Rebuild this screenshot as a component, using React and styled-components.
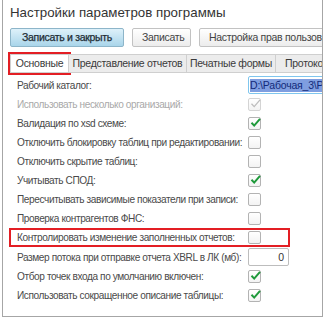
import styled, { createGlobalStyle } from "styled-components";

const Global = createGlobalStyle`
  html, body { margin: 0; padding: 0; background: #fff; }
  body { font-family: "Liberation Sans", Arial, sans-serif; }
`;

const Frame = styled.div`
  margin-left: 2px;
  width: 319px;
  height: 316px;
  border: 1px solid #a6a6a6;
  border-top: none;
  overflow: hidden;
  background: #fff;
`;

const Title = styled.div`
  padding: 5px 0 0 7px;
  height: 19px;
  font-size: 13.3px;
  color: #333;
  white-space: nowrap;
`;

const Toolbar = styled.div`
  display: flex;
  gap: 8px;
  padding: 4px 0 0 7px;
  white-space: nowrap;
`;

const Button = styled.div`
  flex: none;
  width: ${(p) => (p.$width ? `${p.$width}px` : "auto")};
  box-sizing: border-box;
  height: 19px;
  line-height: 17px;
  text-align: center;
  padding: 0 9px;
  border: 1px solid ${(p) => (p.$primary ? "#8db5c9" : "#c2c2c2")};
  border-radius: 2px;
  font-size: 10.5px;
  letter-spacing: -0.3px;
  font-weight: normal;
  color: ${(p) => (p.$primary ? "#1f2d35" : "#444")};
  -webkit-text-stroke: ${(p) => (p.$primary ? "0.25px #1f2d35" : "0")};
  background: ${(p) =>
    p.$primary
      ? "linear-gradient(#def1fa, #a9d5ea)"
      : "linear-gradient(#ffffff, #ececec)"};
`;

const Tabs = styled.div`
  display: flex;
  margin: 7px 0 0 7px;
  white-space: nowrap;
`;

const Tab = styled.div`
  flex: none;
  width: ${(p) => p.$width}px;
  box-sizing: border-box;
  height: 19px;
  line-height: 17px;
  text-align: center;
  font-size: 10.5px;
  letter-spacing: -0.3px;
  color: #3a3a3a;
  background: ${(p) => (p.$active ? "#fff" : "#ececec")};
  border: 1px solid #cfcfcf;
  border-left: none;
  outline: ${(p) => (p.$active ? "2px solid #e31e24" : "none")};
  &:first-child {
    border-left: 1px solid #cfcfcf;
  }
`;

const Form = styled.div`
  padding: 2px 0 0 6px;
`;

const Row = styled.div`
  display: flex;
  align-items: center;
  width: 281px;
  height: ${(p) => (p.$tall ? 20 : 19)}px;
  box-sizing: border-box;
  border: 2px solid ${(p) => (p.$marked ? "#e31e24" : "transparent")};
  padding-left: 6px;
  white-space: nowrap;
`;

const Label = styled.div`
  flex: none;
  width: 231px;
  font-size: 10.1px;
  letter-spacing: -0.4px;
  color: ${(p) => (p.$disabled ? "#a9a9a9" : "#4a4a4a")};
`;

const TextInput = styled.div`
  flex: none;
  width: ${(p) => p.$width}px;
  height: 18px;
  box-sizing: border-box;
  border: 1px solid ${(p) => (p.$focused ? "#7fc6ee" : "#bdbdbd")};
  border-radius: 2px;
  padding: 0 ${(p) => (p.$focused ? 1 : 4)}px;
  display: flex;
  align-items: center;
  justify-content: ${(p) => (p.$right ? "flex-end" : "flex-start")};
  overflow: hidden;
  font-size: 10.5px;
  letter-spacing: -0.2px;
  color: #333;
`;

const Selected = styled.span`
  background: #7f9ee0;
  color: #122a7a;
  line-height: 13px;
`;

const Box = styled.div`
  flex: none;
  position: relative;
  width: 11px;
  height: 11px;
  border: 1px solid ${(p) => (p.$disabled ? "#d4d4d4" : "#b3b3b3")};
  border-radius: 2px;
  background: linear-gradient(#fff, #f3f3f3);
  svg {
    position: absolute;
    left: 1px;
    top: -1px;
  }
`;

function Check({ on, disabled }) {
  return (
    <Box $disabled={disabled}>
      {on && (
        <svg width="11" height="11" viewBox="0 0 11 11">
          <path
            d="M1.5 5.8 L4.2 8.6 L10 1.8"
            fill="none"
            stroke={disabled ? "#bdbdbd" : "#1f9a3b"}
            strokeWidth={disabled ? 1.3 : 2}
          />
        </svg>
      )}
    </Box>
  );
}

const rows = [
  { label: "Использовать несколько организаций:", on: true, disabled: true },
  { label: "Валидация по xsd схеме:", on: true },
  { label: "Отключить блокировку таблиц при редактировании:", on: false },
  { label: "Отключить скрытие таблиц:", on: false },
  { label: "Учитывать СПОД:", on: true },
  { label: "Пересчитывать зависимые показатели при записи:", on: false },
  { label: "Проверка контрагентов ФНС:", on: false },
  { label: "Контролировать изменение заполненных отчетов:", on: false, marked: true },
];

export default function App() {
  return (
    <>
      <Global />
      <Frame>
        <Title>Настройки параметров программы</Title>
        <Toolbar>
          <Button $primary $width={114}>Записать и закрыть</Button>
          <Button $width={59}>Записать</Button>
          <Button>Настройка прав пользователей</Button>
        </Toolbar>
        <Tabs>
          <Tab $active $width={59}>Основные</Tab>
          <Tab $width={118}>Представление отчетов</Tab>
          <Tab $width={89}>Печатные формы</Tab>
          <Tab $width={70}>Протоколы</Tab>
        </Tabs>
        <Form>
          <Row $tall>
            <Label>Рабочий каталог:</Label>
            <TextInput $width={100} $focused>
              <Selected>D:\Рабочая_3\Работа</Selected>
            </TextInput>
          </Row>
          {rows.map((r, i) => (
            <Row key={i} $marked={r.marked}>
              <Label $disabled={r.disabled}>{r.label}</Label>
              <Check on={r.on} disabled={r.disabled} />
            </Row>
          ))}
          <Row $tall>
            <Label>Размер потока при отправке отчета XBRL в ЛК (мб):</Label>
            <TextInput $width={41} $right>0</TextInput>
          </Row>
          <Row>
            <Label>Отбор точек входа по умолчанию включен:</Label>
            <Check on />
          </Row>
          <Row>
            <Label>Использовать сокращенное описание таблицы:</Label>
            <Check on />
          </Row>
        </Form>
      </Frame>
    </>
  );
}
